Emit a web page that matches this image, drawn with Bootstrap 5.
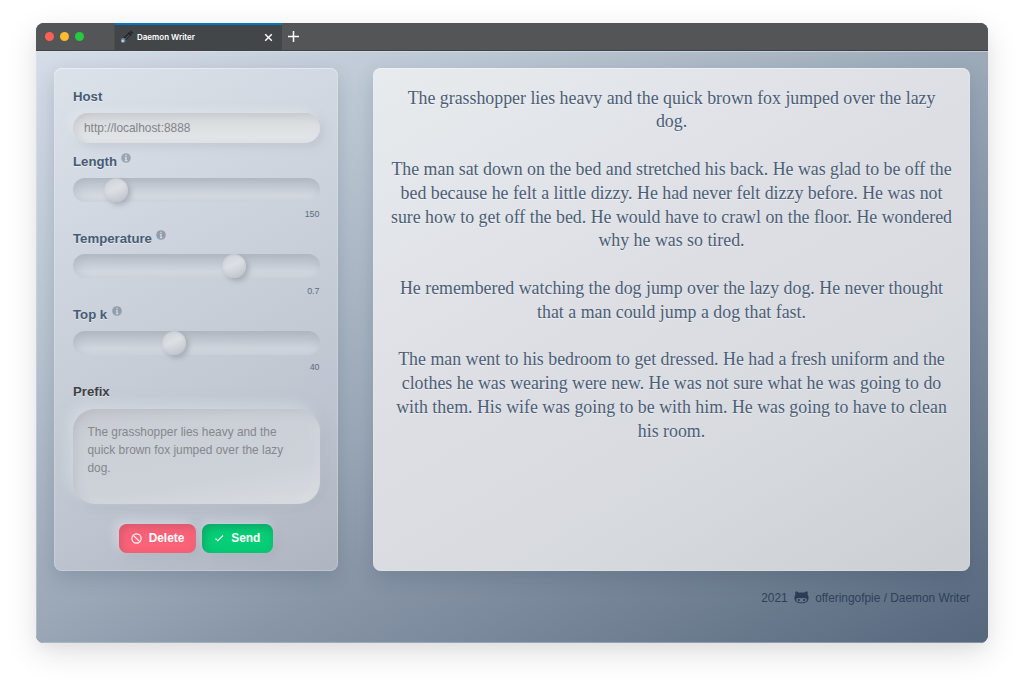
<!DOCTYPE html>
<html lang="en">
<head>
<meta charset="utf-8">
<title>Daemon Writer</title>
<link href="https://cdn.jsdelivr.net/npm/bootstrap@5.3.0/dist/css/bootstrap.min.css" rel="stylesheet">
<style>
body{font-family:"Liberation Sans",Arial,sans-serif;font-size:11.9px;line-height:18px;background:#fff;color:#475a72;height:693px;overflow:hidden;padding:23px 36px 0}
.window{height:620px;border-radius:8px;background:#555658;overflow:hidden}
.frame{border-radius:8px;box-shadow:0 10px 32px rgba(0,0,0,.12),0 6px 14px rgba(0,0,0,.03)}
.titlebar{height:27.5px;background:#545557;border-bottom:1px solid #414243}
.dots{width:78px;padding-left:9px;gap:6px}
.dot{width:9px;height:9px;border-radius:50%}
.tab{width:167.5px;background:#434649;border-top:2px solid #0875bd;border-left:1px solid #4b4c4e;padding:0 9px 0 5px;color:#fff}
.tab-name{font-family:Inter,sans-serif;font-weight:600;font-size:8px;margin-left:3px}
.page{height:592.5px;padding:17.5px 18px 0;background:linear-gradient(150deg,#d5dde8 0%,#b9c5d1 25%,#9aa8b7 50%,#8896a8 62%,#6f7f91 82%,#56677e 100%);box-shadow:inset 0 1px 0 rgba(220,232,245,.5),inset 0 -1px 0 rgba(200,215,230,.4),inset 1px 0 0 rgba(230,235,245,.3)}
.glass{height:503px;border-radius:8px;box-shadow:0 7px 20px rgba(40,55,75,.18),inset 0 0 0 1px rgba(240,245,250,.22),inset 0 1px 0 rgba(255,255,255,.35)}
.controls{width:283.5px;padding:20px 18px 0 19px;background:linear-gradient(152deg,#dbe2ea 0%,#cfd6df 30%,#c7ced7 50%,#bdc4cf 75%,#aeb5c0 100%)}
.story{width:597px;padding:18.7px 17px 0;background:linear-gradient(150deg,#e7ebee 0%,#dddfe4 42%,#d7dadf 70%,#cbcfd4 100%);font:17.83px/23.8px "Liberation Serif","Times New Roman",serif;color:#4b5d76;text-align:center;text-shadow:0 1px 1px rgba(255,255,255,.6)}
.story p{margin:0 -10px 23.8px;white-space:nowrap}
.caption{display:block;height:18px;font-weight:700;font-size:13.2px;line-height:18px;text-shadow:0 1px 0 rgba(255,255,255,.5);color:#475b74}
.info{width:10px;height:10px;margin-left:4.5px;vertical-align:3px}
.host.form-control{height:30px;margin-top:7px;padding:0 11px;border:0;border-radius:15px;font-size:11.9px;color:#818487;background:linear-gradient(#cfd2d6,#dcdfe2 40%,#e4e7ea);box-shadow:-4px -4px 9px rgba(232,235,239,.5),4px 4px 9px rgba(165,174,188,.35),inset 5px 1px 7px rgba(160,162,168,.22)}
.slide{-webkit-appearance:none;appearance:none;display:block;width:247px;height:24px;margin:6.5px 0 0;border-radius:12px;background:linear-gradient(rgba(172,180,190,.7),rgba(190,197,206,.6) 40%,rgba(215,219,228,.65) 75%,rgba(217,221,229,.7));box-shadow:inset 6px 1px 8px rgba(160,168,180,.25),inset -3px 0 6px rgba(160,168,180,.12)}
.slide::-webkit-slider-thumb{-webkit-appearance:none;width:24px;height:24px;border-radius:50%;border:0;background:linear-gradient(155deg,#cfd2d7 5%,#dcdfe3 45%,#cdd0d7 75%,#bfc4cb);box-shadow:3px 3px 5px rgba(110,115,125,.38),inset 0 1px 1px rgba(185,190,197,.5),inset 0 -2px 4px rgba(190,194,202,.5)}
.amount{height:18px;margin-top:3.5px;text-align:right;font-size:8.9px;line-height:18px;color:#5d6c80}
.prefix.form-control{height:95px;margin-top:8px;padding:15px 14.5px;border:0;border-radius:22px;resize:none;overflow:hidden;font-size:11.9px;line-height:17.86px;color:#84878b;background:linear-gradient(170deg,#c5c9ce 0%,#cbd0d7 25%,#cdd2d9 68%,#d8dce0 100%);box-shadow:-5px -5px 12px rgba(225,229,235,.5),5px 5px 12px rgba(165,172,184,.35),inset 3px 3px 9px rgba(155,158,164,.28),inset -4px -4px 8px rgba(224,228,231,.4)}
.act.btn{height:29.5px;border:0;border-radius:8px;padding:0;font-size:11.9px;line-height:29px;font-weight:700;color:#fff;display:flex;align-items:center;justify-content:center}
.act-del{width:77px;background:#fa6378;box-shadow:-4px -4px 10px rgba(225,229,235,.5),4px 4px 10px rgba(150,158,172,.3),inset 2px 3px 9px rgba(180,75,95,.5)}
.act-send{width:70.5px;background:#06ce76;box-shadow:-2px -4px 10px rgba(225,229,235,.4),4px 4px 10px rgba(150,158,172,.3),inset 2px 3px 9px rgba(20,135,95,.6)}
.credit{height:18px;margin-top:17.5px;color:#2e3f58;font-size:11.9px}
</style>
</head>
<body>
<div class="frame">
<div class="window">
  <header class="titlebar d-flex">
    <div class="dots d-flex align-items-center"><i class="dot" style="background:#fe5f56"></i><i class="dot" style="background:#febb2d"></i><i class="dot" style="background:#27c93f"></i></div>
    <div class="tab d-flex align-items-center">
      <svg width="14" height="14" viewBox="0 0 14 14"><path d="M3.500 10L10.500 3" stroke="#252a31" stroke-width="3.400"/><path d="M5 9L9.500 4.500" stroke="#525d69" stroke-width="1"/><path d="M8.500 2.600l2.700 2.600M10.500 1l2.200 2.200" stroke="#1f252d" stroke-width="1.500"/><circle cx="3.200" cy="10.400" r="2.300" fill="#75889a"/><circle cx="2.700" cy="11" r="1.200" fill="#bfd0df"/></svg>
      <span class="tab-name">Daemon Writer</span>
      <svg class="ms-auto" width="9" height="9" viewBox="0 0 9 9"><path d="M1.2 1.2l6.600 6.600M7.800 1.200L1.200 7.800" stroke="#fff" stroke-width="1.4"/></svg>
    </div>
    <div class="d-flex align-items-center" style="padding-left:6px"><svg width="11" height="11" viewBox="0 0 11 11"><path d="M5.5 0v11M0 5.5h11" stroke="#fff" stroke-width="1.5"/></svg></div>
  </header>
  <main class="page">
    <div class="d-flex justify-content-between">
      <form class="glass controls">
        <label class="caption">Host</label>
        <input class="form-control host" value="http://localhost:8888">
        <label class="caption" style="margin-top:10.4px">Length<svg class="info" viewBox="0 0 10 10"><circle cx="5" cy="5" r="4.8" fill="#9aa5b3"/><path d="M5 1.8v1.500M3.900 4.600H5v3M3.800 7.600h2.600" stroke="#d8dee6" stroke-width="1.300" fill="none"/></svg></label>
        <input type="range" class="slide" min="0" max="1080" value="150">
        <div class="amount">150</div>
        <label class="caption" style="margin-top:6.5px">Temperature<svg class="info" viewBox="0 0 10 10"><circle cx="5" cy="5" r="4.8" fill="#929dac"/><path d="M5 1.8v1.500M3.900 4.600H5v3M3.800 7.600h2.600" stroke="#d3d9e2" stroke-width="1.300" fill="none"/></svg></label>
        <input type="range" class="slide" min="0" max="1.05" step="0.01" value="0.7">
        <div class="amount">0.7</div>
        <label class="caption" style="margin-top:6.5px">Top k<svg class="info" viewBox="0 0 10 10"><circle cx="5" cy="5" r="4.8" fill="#929dac"/><path d="M5 1.8v1.500M3.900 4.600H5v3M3.800 7.600h2.600" stroke="#d0d6df" stroke-width="1.300" fill="none"/></svg></label>
        <input type="range" class="slide" min="0" max="100" value="40">
        <div class="amount">40</div>
        <label class="caption" style="margin-top:6.5px;color:#3f4043">Prefix</label>
        <textarea class="form-control prefix">The grasshopper lies heavy and the quick brown fox jumped over the lazy dog.</textarea>
        <div class="d-flex justify-content-center" style="gap:6px;margin:19.8px 1px 0 0">
          <button type="button" class="btn act act-del"><svg width="11" height="11" viewBox="0 0 11 11" style="margin-right:7px"><circle cx="5.5" cy="5.5" r="4.6" fill="none" stroke="#fff" stroke-width="1.1"/><path d="M2.3 2.3l6.400 6.400" stroke="#fff" stroke-width="1.1"/></svg>Delete</button>
          <button type="button" class="btn act act-send"><svg width="10" height="10" viewBox="0 0 10 10" style="margin-right:7px"><path d="M1.500 5.500l2.300 2.300L9 2.500" fill="none" stroke="#fff" stroke-width="1.1"/></svg>Send</button>
        </div>
      </form>
      <section class="glass story">
        <p>The grasshopper lies heavy and the quick brown fox jumped over the lazy<br>dog.</p>
        <p>The man sat down on the bed and stretched his back. He was glad to be off the<br>bed because he felt a little dizzy. He had never felt dizzy before. He was not<br>sure how to get off the bed. He would have to crawl on the floor. He wondered<br>why he was so tired.</p>
        <p>He remembered watching the dog jump over the lazy dog. He never thought<br>that a man could jump a dog that fast.</p>
        <p>The man went to his bedroom to get dressed. He had a fresh uniform and the<br>clothes he was wearing were new. He was not sure what he was going to do<br>with them. His wife was going to be with him. He was going to have to clean<br>his room.</p>
      </section>
    </div>
    <footer class="credit d-flex justify-content-end align-items-center">
      <span>2021</span>
      <svg width="15" height="13" viewBox="0 0 15 13" style="margin:0 6px 0 6.500px"><path fill="#2b3c55" fill-rule="evenodd" d="M1.500.8C1.800.3 4 .9 5 1.800c1.500-.3 3.500-.3 5 0C11 .9 13.200.3 13.500.8c.4 1.100.3 2.200.1 2.900.7.800 1 1.700 1 2.900 0 4.300-2.500 5.700-7.100 5.700S.4 10.900.4 6.600c0-1.200.3-2.100 1-2.900C1.200 3 1.100 1.900 1.500.8zM4.300 7C2.800 7 2.200 7.800 2.200 8.900c0 1.900 1.800 2.300 5.300 2.300s5.300-.4 5.300-2.300c0-1.100-.6-1.900-2.100-1.900-1.100 0-2 .2-3.200.2S5.400 7 4.300 7z"/><ellipse cx="4.800" cy="9" rx="1" ry="1.300" fill="#2b3c55"/><ellipse cx="10.200" cy="9" rx="1" ry="1.300" fill="#2b3c55"/></svg>
      <span>offeringofpie / Daemon Writer</span>
    </footer>
  </main>
</div>
</div>
<script src="https://cdn.jsdelivr.net/npm/bootstrap@5.3.0/dist/js/bootstrap.bundle.min.js"></script>
</body>
</html>
